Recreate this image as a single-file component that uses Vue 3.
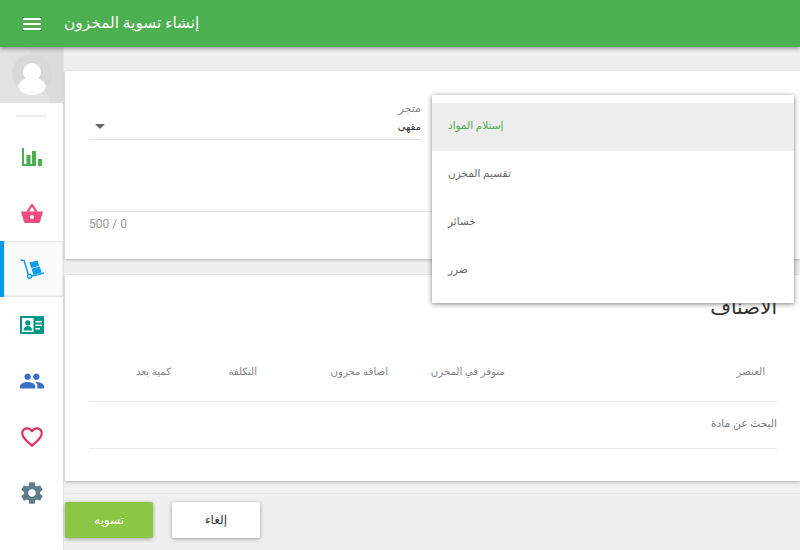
<script setup>
const menu = ['إستلام المواد', 'تقسيم المخزن', 'خسائر', 'ضرر']
const cols = ['العنصر', 'متوفر في المخزن', 'اضافة مخزون', 'التكلفة', 'كمية بعد']
</script>

<template>
  <div class="page">
    <header class="topbar">
      <div class="burger"><i></i><i></i><i></i></div>
      <h1 class="title">إنشاء تسوية المخزون</h1>
    </header>
    <div class="body">
      <aside class="side">
        <div class="avatar">
          <svg viewBox="0 0 63 56" width="63" height="56">
            <rect width="63" height="56" fill="#e2e2e2" />
            <path d="M28 0h35v56H50C48 44 38 34 30 8z" fill="#dcdcdc" />
            <circle cx="32" cy="27" r="20" fill="#d8d8d8" />
            <circle cx="32" cy="25" r="9" fill="#fff" />
            <path d="M18 40c1.500-6 7-10 14-10s12.500 4 14 10c-2 5-8 8-14 8s-12-3-14-8z" fill="#fff" />
          </svg>
        </div>
        <div class="rule"></div>
        <div class="nav-item">
          <svg viewBox="0 0 20 18" width="20" height="18" fill="#4caf50"><path d="M0 0h2v18H0zM4.500 7h4v11h-4zM10 3h4v15h-4zM16 11h4v7h-4zM0 16h14v2H0z" /></svg>
        </div>
        <div class="nav-item">
          <svg viewBox="0 0 22 19" width="22" height="19"><path d="M0 7.500h5.500L10 .5a1.200 1.200 0 0 1 2 0l4.500 7H22l-3 10.500a1.500 1.500 0 0 1-1.500 1h-13A1.500 1.500 0 0 1 3 18z" fill="#ec4c80" /><path d="M8 7.500l3-4.500 3 4.500z" fill="#fff" /><circle cx="11" cy="13" r="2" fill="#fff" /></svg>
        </div>
        <div class="nav-item active">
          <svg viewBox="0 0 24 20" width="24" height="20"><path d="M.5 .8l3.700 1L8.200 15" fill="none" stroke="#0d9ae8" stroke-width="1.500" /><circle cx="9.500" cy="17.200" r="2" fill="none" stroke="#0d9ae8" stroke-width="1.400" /><path d="M12 17l12-3" fill="none" stroke="#0d9ae8" stroke-width="1.600" /><path d="M9.500 3.500l8-2 1.600 5.500-8 2zM11.500 9.800l8.300-2.300 1.800 6-8.300 2.300z" fill="#0d9ae8" /></svg>
        </div>
        <div class="nav-item">
          <svg viewBox="0 0 24 18" width="24" height="18"><rect width="24" height="18" rx="1" fill="#009688" /><rect x="2" y="2" width="11.500" height="14" fill="#fff" /><circle cx="7.800" cy="6.800" r="2.600" fill="#009688" /><path d="M3.500 14.500c0-3 2-4.500 4.300-4.500s4.300 1.500 4.300 4.500z" fill="#009688" /><path d="M15.500 5h6.500v1.500h-6.500zM15.500 8.500h6.500V10h-6.500zM15.500 12h4.500v1.500h-4.500z" fill="#fff" /></svg>
        </div>
        <div class="nav-item">
          <svg viewBox="0 0 24 24" width="26" height="26" fill="#3a70c4"><path d="M16 11c1.660 0 2.990-1.340 2.990-3S17.660 5 16 5s-3 1.340-3 3 1.340 3 3 3zm-8 0c1.660 0 2.990-1.340 2.990-3S9.660 5 8 5 5 6.340 5 8s1.340 3 3 3zm0 2c-2.330 0-7 1.170-7 3.500V19h14v-2.500C15 14.170 10.330 13 8 13zm8 0c-.29 0-.62.020-.97.050 1.160.84 1.970 1.970 1.970 3.450V19h6v-2.500c0-2.330-4.670-3.500-7-3.500z" /></svg>
        </div>
        <div class="nav-item">
          <svg viewBox="0 0 24 24" width="26" height="26" fill="#e0325f"><path d="M16.500 3c-1.740 0-3.410.81-4.500 2.090C10.910 3.810 9.240 3 7.500 3 4.420 3 2 5.420 2 8.500c0 3.780 3.400 6.860 8.550 11.540L12 21.350l1.450-1.320C18.600 15.360 22 12.280 22 8.500 22 5.420 19.580 3 16.500 3zm-4.400 15.550l-.1.100-.1-.1C7.140 14.240 4 11.390 4 8.500 4 6.500 5.500 5 7.500 5c1.540 0 3.040.99 3.570 2.360h1.870C13.460 5.990 14.960 5 16.500 5c2 0 3.500 1.500 3.500 3.500 0 2.890-3.140 5.740-7.900 10.050z" /></svg>
        </div>
        <div class="nav-item">
          <svg viewBox="0 0 24 24" width="26" height="26" fill="#607d8b"><path d="M19.430 12.980c.04-.32.070-.64.070-.98s-.03-.66-.07-.98l2.110-1.650c.19-.15.240-.42.120-.64l-2-3.460c-.12-.22-.39-.3-.61-.22l-2.490 1c-.52-.4-1.080-.73-1.690-.98l-.38-2.650C14.460 2.180 14.250 2 14 2h-4c-.25 0-.46.180-.49.420l-.38 2.650c-.61.250-1.170.590-1.690.98l-2.490-1c-.23-.09-.49 0-.61.220l-2 3.460c-.13.220-.07.490.12.640l2.110 1.650c-.04.320-.07.650-.07.980s.03.660.07.980l-2.110 1.650c-.19.150-.24.420-.12.640l2 3.460c.12.220.39.300.61.220l2.490-1c.52.400 1.080.730 1.690.980l.38 2.650c.03.240.24.420.49.420h4c.25 0 .46-.18.49-.42l.38-2.650c.61-.25 1.170-.59 1.690-.98l2.490 1c.23.090.49 0 .61-.22l2-3.460c.12-.22.070-.49-.12-.64l-2.110-1.650zM12 15.500c-1.930 0-3.500-1.570-3.500-3.500s1.570-3.500 3.500-3.500 3.500 1.570 3.500 3.500-1.570 3.500-3.500 3.500z" /></svg>
        </div>
      </aside>

      <main class="main">
        <section class="card card-form">
          <div class="field">
            <span class="caret"></span>
            <div class="field-text" dir="rtl">
              <label>متجر</label>
              <span>مقهى</span>
            </div>
          </div>
          <div class="note">
            <span class="count">500 / 0</span>
          </div>
        </section>

        <section class="card card-items" dir="rtl">
          <h2>الأصناف</h2>
          <div class="thead">
            <span v-for="c in cols" :key="c">{{ c }}</span>
          </div>
          <div class="search">البحث عن مادة</div>
        </section>

        <footer class="actions">
          <button class="btn primary" type="button">تسويه</button>
          <button class="btn" type="button">إلغاء</button>
        </footer>

        <ul class="menu">
          <li v-for="(m, i) in menu" :key="m" :class="{ on: i === 0 }">{{ m }}</li>
        </ul>
      </main>
    </div>
  </div>
</template>

<style>
html, body { margin: 0; overflow: hidden; }
</style>

<style scoped>
.page {
  width: 800px;
  height: 550px;
  overflow: hidden;
  display: flex;
  flex-direction: column;
  font-family: Roboto, "Liberation Sans", "DejaVu Sans", sans-serif;
  background: #f0f0f0;
}
.topbar {
  height: 47px;
  flex: none;
  background: #4caf50;
  box-shadow: 0 2px 4px rgba(0, 0, 0, .35);
  display: flex;
  align-items: center;
  padding-left: 23px;
  color: #fff;
  position: relative;
  z-index: 3;
}
.burger { width: 18px; display: flex; flex-direction: column; gap: 3px; }
.burger i { display: block; height: 2px; background: #fff; }
.title { margin: 0 0 2px 23px; font-size: 15.400px; font-weight: 400; direction: rtl; }
.body { flex: 1; display: flex; min-height: 0; }
.side {
  width: 63px;
  flex: none;
  background: #fff;
  border-right: 1px solid #e3e3e3;
}
.avatar { height: 56px; }
.avatar svg { display: block; }
.rule { height: 2px; width: 31px; margin: 12px 0 12px 16px; background: #ececec; }
.nav-item {
  height: 56px;
  display: flex;
  align-items: center;
  justify-content: center;
  box-sizing: border-box;
}
.nav-item.active {
  background: #fbfbfb;
  border-left: 4px solid #039be5;
  padding-right: 4px;
  box-shadow: inset 0 1px 2px rgba(0, 0, 0, .12), inset 0 -1px 2px rgba(0, 0, 0, .12);
}
.main { flex: 1; min-width: 0; position: relative; padding: 24px 0 0 1px; }
.card {
  background: #fff;
  box-shadow: 0 1px 3px rgba(0, 0, 0, .26);
}
.card-form { height: 188px; padding: 0 23px 0 24px; box-sizing: border-box; }
.field {
  width: 332px;
  height: 69px;
  border-bottom: 1px solid #e0e0e0;
  display: flex;
  justify-content: space-between;
  align-items: flex-end;
  box-sizing: border-box;
}
.caret {
  width: 0;
  height: 0;
  border: 5px solid transparent;
  border-top: 5px solid #666;
  border-bottom: 0;
  margin: 0 0 10px 6px;
}
.field-text { display: flex; flex-direction: column; padding-bottom: 5px; }
.field-text label { font-size: 11px; color: #8a8a8a; line-height: 16px; margin-bottom: 3px; }
.field-text span { font-size: 10px; color: #333; line-height: 14px; }
.note { margin-top: 71px; border-top: 1px solid #e0e0e0; padding-top: 5px; }
.count { font-size: 12px; line-height: 14px; color: #999; display: block; }
.card-items {
  margin-top: 16px;
  height: 206px;
  padding: 20px 23px 0 24px;
  box-sizing: border-box;
}
h2 { margin: 0; font-size: 20px; font-weight: 400; line-height: 24px; color: #333; }
.thead {
  display: grid;
  grid-template-columns: 260px 117px 131px 86px 1fr;
  height: 63px;
  padding-right: 12px;
  margin-top: 20px;
  padding-top: 2px;
  align-items: center;
  font-size: 10.200px;
  color: #858585;
  border-bottom: 1px solid #e8e8e8;
  box-sizing: border-box;
}
.search {
  height: 47px;
  line-height: 43px;
  font-size: 10.700px;
  color: #777;
  border-bottom: 1px solid #e8e8e8;
  box-sizing: border-box;
}
.actions {
  margin-top: 12px;
  border-top: 1px solid #e6e6e6;
  padding: 8px 0 0;
  display: flex;
  gap: 19px;
}
.btn {
  width: 88px;
  height: 36px;
  border: 0;
  border-radius: 2px;
  background: #fff;
  color: #333;
  font: inherit;
  font-size: 12px;
  padding: 0;
  box-shadow: 0 1px 4px rgba(0, 0, 0, .35);
}
.btn.primary { background: #8bc745; color: #fff; }
.menu {
  position: absolute;
  left: 368px;
  top: 48px;
  width: 362px;
  margin: 0;
  padding: 8px 0;
  list-style: none;
  background: #fff;
  box-shadow: 0 1px 5px rgba(0, 0, 0, .5);
  z-index: 2;
}
.menu li {
  height: 48px;
  line-height: 46px;
  padding-left: 16px;
  font-size: 10.500px;
  color: #666;
}
.menu li.on { background: #ededed; color: #4caf50; }
</style>
